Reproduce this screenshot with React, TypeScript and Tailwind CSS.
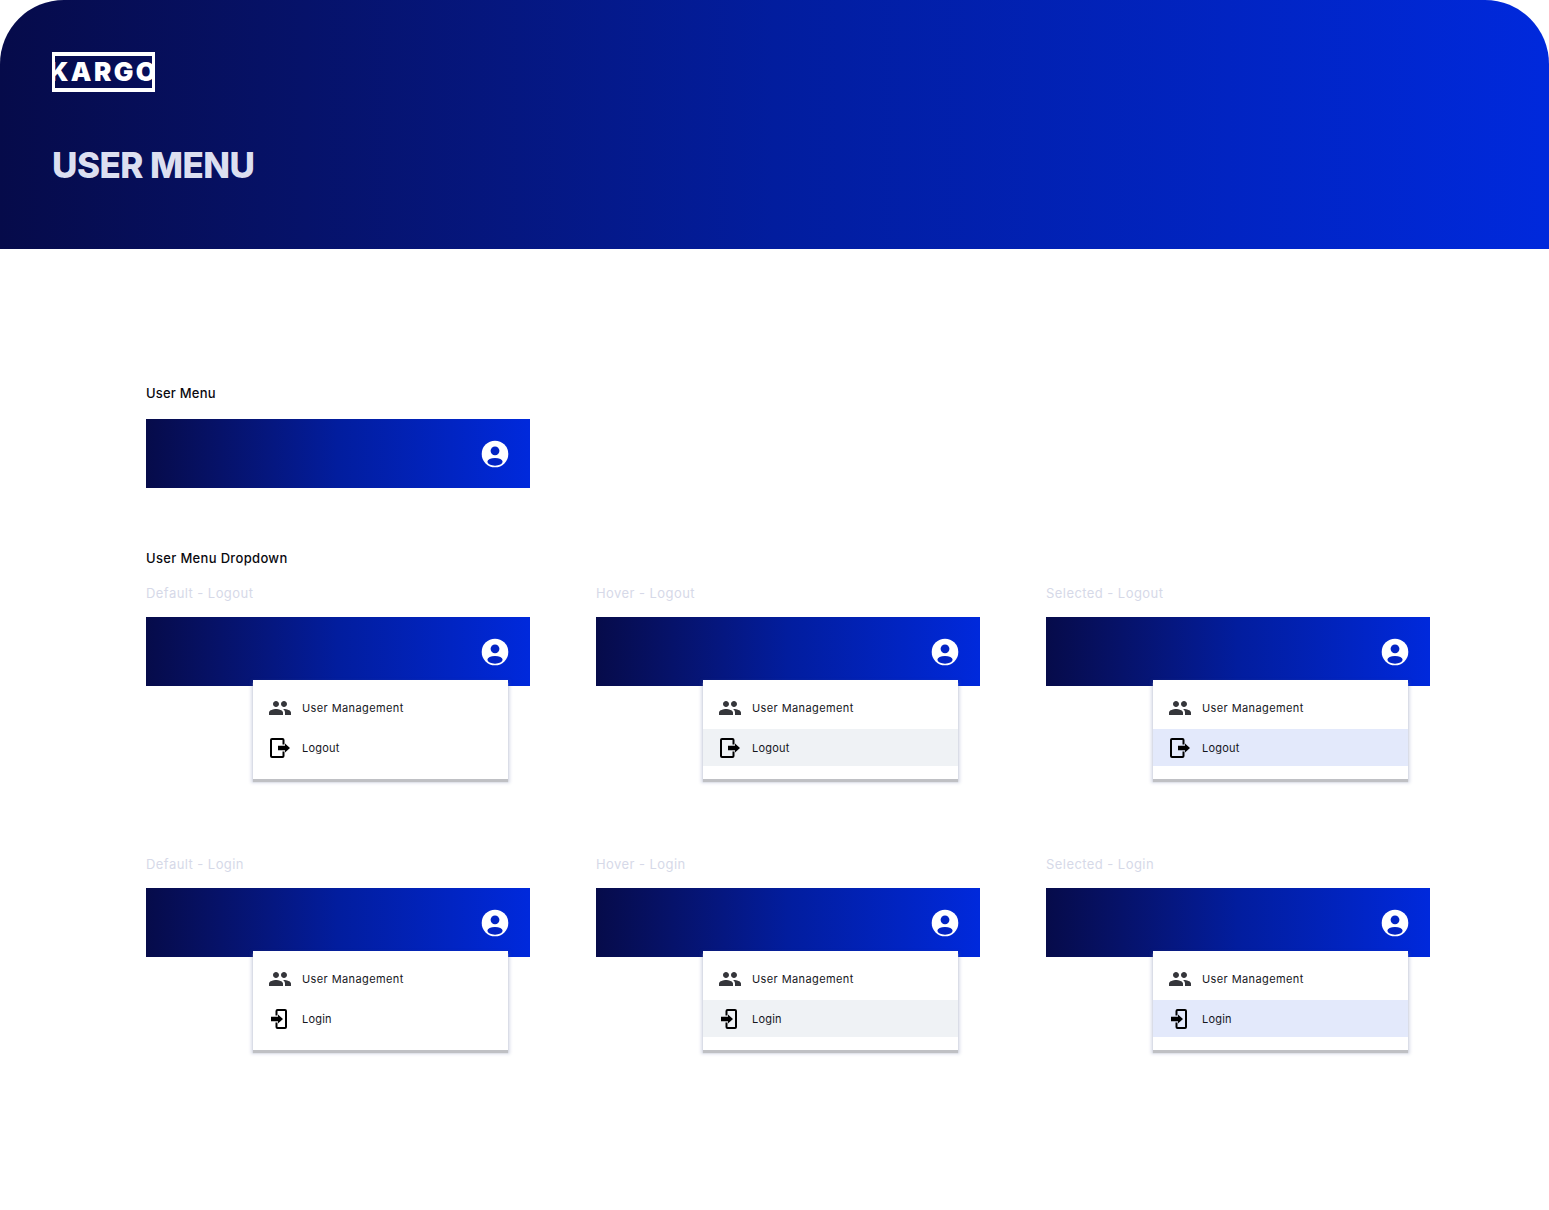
import { MdPeople } from 'react-icons/md'

type Tone = 'default' | 'hover' | 'selected'

const FONT = "font-['Inter','Liberation_Sans',sans-serif]"

function AccountIcon() {
  return (
    <svg width="28" height="28" viewBox="0 0 28 28" aria-hidden="true">
      <circle cx="14" cy="14" r="13.3" fill="#fff" />
      <circle cx="14" cy="10.8" r="4.4" fill="#0224c4" />
      <ellipse cx="14" cy="21.8" rx="7.6" ry="3.9" fill="#0224c4" />
    </svg>
  )
}

function LogoutIcon() {
  return (
    <svg width="24" height="24" viewBox="0 0 24 24" aria-hidden="true" className="shrink-0">
      <path d="M15.500 8.500V4a1 1 0 0 0-1-1H4a1 1 0 0 0-1 1v16a1 1 0 0 0 1 1h10.500a1 1 0 0 0 1-1v-4.500" fill="none" stroke="#000" strokeWidth="2" />
      <path d="M10 9.700h7V7.500l5 4.500-5 4.500v-2.200h-7z" fill="#000" />
    </svg>
  )
}

function LoginIcon() {
  return (
    <svg width="24" height="24" viewBox="0 0 24 24" aria-hidden="true" className="shrink-0">
      <path d="M8.500 8.500V4a1 1 0 0 1 1-1h7.500a1 1 0 0 1 1 1v16a1 1 0 0 1-1 1H9.500a1 1 0 0 1-1-1v-4.500" fill="none" stroke="#000" strokeWidth="2" />
      <path d="M3 9.700h7V7.500l5 4.500-5 4.500v-2.200H3z" fill="#000" />
    </svg>
  )
}

function Bar() {
  return (
    <div className="flex h-[69px] items-center justify-end bg-gradient-to-r from-[#060b4a] via-[#021d9e] to-[#0029dc] pr-[21px]">
      <AccountIcon />
    </div>
  )
}

function Dropdown({ action, tone }: { action: 'Logout' | 'Login'; tone: Tone }) {
  const rowBg = tone === 'hover' ? 'bg-[#eff2f5]' : tone === 'selected' ? 'bg-[#e3e9fb]' : ''
  return (
    <div className="relative w-[384px]">
      <Bar />
      <div className="absolute left-[107px] top-[63px] h-[99px] w-[255px] bg-white pt-[9px] shadow-[0_3px_1px_0_#bfc0c4,0_2px_3px_2px_rgba(70,85,150,0.2)]">
        <div className="flex h-[37px] items-center">
          <span className="flex w-[49px] justify-center pl-[5px]">
            <MdPeople size={24} color="#35363b" />
          </span>
          <span className="pt-[2px] text-[11px] tracking-[0.4px] text-[#15161c]">User Management</span>
        </div>
        <div className={`mt-[3px] flex h-[37px] items-center ${rowBg}`}>
          <span className="flex w-[49px] justify-center pl-[5px]">
            {action === 'Logout' ? <LogoutIcon /> : <LoginIcon />}
          </span>
          <span className="pt-[2px] text-[11px] tracking-[0.2px] text-[#15161c]">{action}</span>
        </div>
      </div>
    </div>
  )
}

function Variant({ label, action, tone }: { label: string; action: 'Logout' | 'Login'; tone: Tone }) {
  return (
    <div>
      <p className="h-[16px] text-[13px] leading-[16px] tracking-[0.44px] text-[#d6d9e8]">{label}</p>
      <div className="mt-[16px]">
        <Dropdown action={action} tone={tone} />
      </div>
    </div>
  )
}

export default function App() {
  return (
    <div className={`${FONT} min-h-[1210px] w-[1549px] overflow-hidden bg-white`}>
      <header className="h-[249px] rounded-t-[64px] bg-gradient-to-r from-[#060b4a] via-[#021d9e] to-[#0029dc] pl-[52px] pt-[52px]">
        <div className="flex h-[40px] w-[103px] items-center justify-center overflow-hidden border-x-[3px] border-y-[4px] border-white">
          <span className="whitespace-nowrap text-[26px] font-black leading-none tracking-[2.4px] text-white">KARGO</span>
        </div>
        <h1 className="mt-[52px] text-[35px] font-extrabold leading-[42px] tracking-[-0.55px] text-[#dcdff0]">USER MENU</h1>
      </header>

      <main className="pl-[146px]">
        <h2 className="mt-[136px] h-[16px] text-[13px] font-medium leading-[16px] tracking-[0.2px] text-[#0a0a0f]">User Menu</h2>
        <div className="mt-[18px] w-[384px]">
          <Bar />
        </div>

        <h2 className="mt-[62px] h-[16px] text-[13px] font-medium leading-[16px] tracking-[0.33px] text-[#0a0a0f]">User Menu Dropdown</h2>

        <div className="mt-[19px] grid w-[1284px] grid-cols-3 gap-x-[66px] gap-y-[170px]">
          <Variant label="Default - Logout" action="Logout" tone="default" />
          <Variant label="Hover - Logout" action="Logout" tone="hover" />
          <Variant label="Selected - Logout" action="Logout" tone="selected" />
          <Variant label="Default - Login" action="Login" tone="default" />
          <Variant label="Hover - Login" action="Login" tone="hover" />
          <Variant label="Selected - Login" action="Login" tone="selected" />
        </div>
      </main>
    </div>
  )
}
